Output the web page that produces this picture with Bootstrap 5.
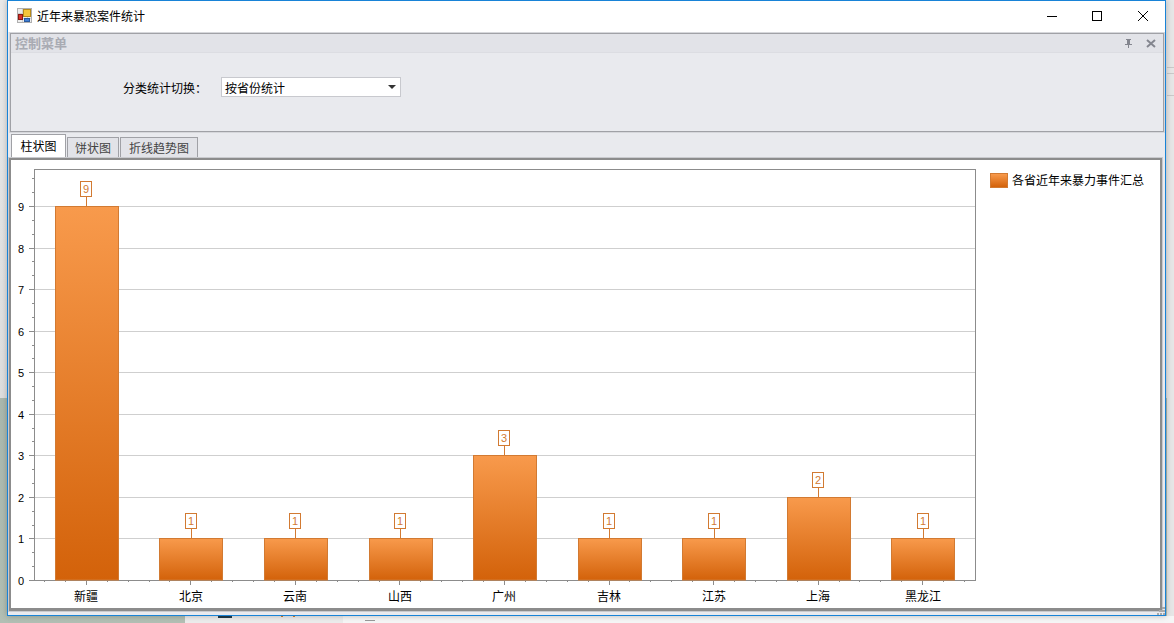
<!DOCTYPE html>
<html lang="zh">
<head>
<meta charset="utf-8">
<title>近年来暴恐案件统计</title>
<link href="https://cdn.jsdelivr.net/npm/bootstrap@5.3.0/dist/css/bootstrap.min.css" rel="stylesheet">
<style>
html,body{width:1174px;height:623px;overflow:hidden;margin:0}
body{font:12px/16px "Noto Sans CJK SC","Liberation Sans",sans-serif;color:#000;
background:
 linear-gradient(#1f3a4a,#1f3a4a) 218px 616px/14px 2px no-repeat,
 linear-gradient(#d9822b,#d9822b) 281px 616px/2px 1px no-repeat,
 linear-gradient(#d9822b,#d9822b) 293px 616px/2px 1px no-repeat,
 linear-gradient(#9a9a9a,#9a9a9a) 365px 620px/10px 1px no-repeat,
 linear-gradient(#c9c9c9,#c9c9c9) 1167px 67px/7px 1px no-repeat,
 linear-gradient(#c9c9c9,#c9c9c9) 1167px 73px/7px 1px no-repeat,
 linear-gradient(#c9c9c9,#c9c9c9) 1167px 95px/7px 1px no-repeat,
 linear-gradient(#f6f6f6,#f6f6f6) 343px 616px/831px 7px no-repeat,
 linear-gradient(#ececec,#ececec) 185px 616px/158px 7px no-repeat,
 linear-gradient(#e6e6e6,#e6e6e6) 1167px 0/7px 623px no-repeat,
 linear-gradient(#e9e9e9 0,#dedede 398px,#aab8ae 398px,#b2bfb4 623px)}
.desk{height:623px;padding-left:7px}
.win{width:1159px;height:616px;background:#e9eaee;border:1px solid #1883d7;box-shadow:0 0 6px rgba(0,0,0,.25)}
.titlebar{height:31px;background:#fff;padding:0 0 2px 9px}
.ttl{margin-left:4px;font-size:12px}
.capbtn{width:46px;height:31px}
.capbtn:last-child{margin-right:-1px}
.ctl-panel{margin:1px 1px 0 2px;height:99px;border:1px solid #a0a1a6;box-shadow:0 0 0 1px #d6d7db}
.ctl-head{height:19px;background:#e2e3e8;border-bottom:1px solid #dcdde2;padding:0 7px 0 4px}
.ctl-title{font-weight:700;font-size:13px;color:#a9abb3}
.pin-gap{gap:14px}
.ctl-form{padding:24px 0 0 112px}
.ctl-lbl{width:98px;padding-top:2px}
.combo{width:180px;height:20px;background:#fff;border:1px solid #c8c9ce;padding:1px 4px 0 3px}
.combo-arrow{width:0;height:0;border:4px solid transparent;border-top-color:#333;border-bottom:0;margin-top:-1px}
.tabstrip{margin:2px 0 0 3px;height:25px;gap:1px}
.tb{height:22px;border:1px solid #a0a1a6;border-bottom:0;background:#e2e3e8;color:#444;padding-top:2px;text-align:center}
.tb-on{height:25px;width:55px;background:#fff;color:#000;padding-top:3px}
.tb-w3{width:52px}
.tb-w5{width:78px}
.tab-body{margin:-1px 3px 0 1px;height:453px;background:#fff;border:2px solid #8c8c8c;border-width:2px 2px 3px 2px;box-shadow:0 0 0 1px #c9cace}
.plot{display:block;width:1150px;height:448px}
.legend-area{top:12px;left:979px}
.swatch{width:18px;height:15px;background:linear-gradient(#f89a4c,#d3620a);border:1px solid #d27a32}
.grip{right:-5px;bottom:-7px}
</style>
</head>
<body>
<div class="desk">
<div class="win d-flex flex-column">
  <div class="titlebar d-flex align-items-center">
    <svg width="16" height="16" viewBox="0 0 16 16"><rect x=".5" y=".5" width="14" height="14" fill="#ececec" stroke="#b0b0b0"/><path d="M1 5.5h13M1 10.5h13M5.5 1v13M10.5 1v13" stroke="#cfcfcf"/><rect x="6.5" y="1.5" width="7" height="7" fill="#f5c63c" stroke="#b68a1c"/><rect x="1.5" y="6.5" width="4" height="5" fill="#d8332a" stroke="#8a1a14"/><rect x="7.5" y="10.5" width="5" height="3" fill="#3f7fd6" stroke="#2a5a9e"/></svg>
    <span class="ttl flex-grow-1">近年来暴恐案件统计</span>
    <div class="capbtn d-flex align-items-center justify-content-center"><svg width="12" height="12"><path d="M2 6.5h10" stroke="#000"/></svg></div>
    <div class="capbtn d-flex align-items-center justify-content-center"><svg width="12" height="12"><rect x="1.5" y="1.5" width="9" height="9" fill="none" stroke="#000"/></svg></div>
    <div class="capbtn d-flex align-items-center justify-content-center"><svg width="12" height="12"><path d="M1 1l10 10M11 1L1 11" stroke="#000"/></svg></div>
  </div>
  <div class="ctl-panel">
    <div class="ctl-head d-flex align-items-center justify-content-between">
      <span class="ctl-title">控制菜单</span>
      <span class="d-flex align-items-center pin-gap">
        <svg width="8" height="9" viewBox="0 0 8 9"><path d="M2 0h5v1H6v4h2v1H5v3H4V6H1V5h2V1H2z" fill="#84868f"/></svg>
        <svg width="10" height="9" viewBox="0 0 10 9"><path d="M1 1l8 7M9 1L1 8" stroke="#84868f" stroke-width="2"/></svg>
      </span>
    </div>
    <div class="ctl-form d-flex align-items-center">
      <span class="ctl-lbl">分类统计切换：</span>
      <div class="combo d-flex align-items-center justify-content-between"><span>按省份统计</span><i class="combo-arrow"></i></div>
    </div>
  </div>
  <div class="tabstrip d-flex align-items-end">
    <div class="tb tb-on">柱状图</div>
    <div class="tb tb-w3">饼状图</div>
    <div class="tb tb-w5">折线趋势图</div>
  </div>
  <div class="tab-body position-relative">
    <svg class="plot" id="plot" viewBox="0 0 1150 448" font-family="'Liberation Sans','Noto Sans CJK SC',sans-serif" font-size="12"></svg>
    <div class="legend-area position-absolute d-flex align-items-center gap-1"><i class="swatch"></i><span>各省近年来暴力事件汇总</span></div>
    <svg class="grip position-absolute" width="8" height="8" viewBox="0 0 8 8"><path d="M5 0h3v2H5zM2 3h3v2H2zM5 3h3v2H5zM0 6h2v2H0zM3 6h2v2H3zM6 6h2v2H6z" fill="#a9a9a9"/></svg>
  </div>
</div>
</div>
<script>
const ox=-11,oy=-160;
const data=[["新疆",9,55,86],["北京",1,159,191],["云南",1,264,295],["山西",1,369,400],["广州",3,473,504],["吉林",1,578,609],["江苏",1,682,714],["上海",2,787,818],["黑龙江",1,891,923]];
const L=34+ox,R=975+ox,T=169+oy,B=580+oy,step=374/9,xs=104.55;
let s='<defs><linearGradient id="g" x1="0" y1="0" x2="0" y2="1"><stop offset="0" stop-color="#f89a4c"/><stop offset="1" stop-color="#d3620a"/></linearGradient></defs>';
for(let v=1;v<=9;v++){const y=Math.round(B-v*step)+.5;s+=`<path d="M${L} ${y}H${R}" stroke="#cfcfcf"/>`}
for(let v=0;v<=9.9;v+=1/3){const y=Math.round(B-v*step)+.5;const maj=Math.abs(v-Math.round(v))<.01;s+=`<path d="M${L-(maj?5:2)} ${y}H${L}" stroke="#8c8c8c"/>`;
 if(maj)s+=`<text x="${L-10}" y="${y+4}" text-anchor="end" font-size="11">${Math.round(v)}</text>`}
for(let i=0;i<=44;i++){const x=Math.round(44+ox+i*xs/5)+.5;const maj=(i-2)%5==0;s+=`<path d="M${x} ${B}v${maj?5:2}" stroke="#8c8c8c"/>`}
s+=`<rect x="${L+.5}" y="${T+.5}" width="${R-L}" height="${B-T}" fill="none" stroke="#8c8c8c"/>`;
data.forEach(([n,v,l,st])=>{const x=l+ox,c=st+ox,h=Math.round(v*step),y=B-h;
 s+=`<rect x="${x+.5}" y="${y+.5}" width="63" height="${h-.5}" fill="url(#g)" stroke="#d27a32"/>`;
 s+=`<path d="M${c+.5} ${y}v-9" stroke="#d27a32"/><rect x="${c-5.5}" y="${y-24.5}" width="11" height="15" fill="#fff" stroke="#d27a32"/>`;
 s+=`<text x="${c}" y="${y-13}" text-anchor="middle" font-size="11" fill="#d27a32">${v}</text>`;
 s+=`<text x="${c}" y="${B+21}" text-anchor="middle">${n}</text>`;});
document.getElementById('plot').innerHTML=s;
</script>
<script src="https://cdn.jsdelivr.net/npm/bootstrap@5.3.0/dist/js/bootstrap.bundle.min.js"></script>
</body>
</html>
